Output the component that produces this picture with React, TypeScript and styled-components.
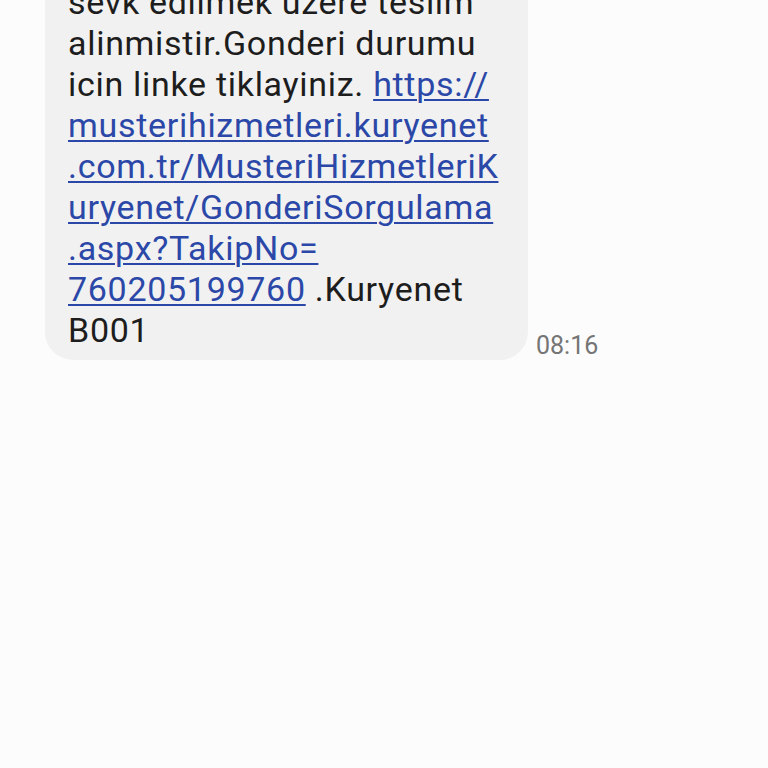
import React from "react";
import styled, { createGlobalStyle } from "styled-components";

const Global = createGlobalStyle`
  html, body {
    margin: 0;
    padding: 0;
    background: #fcfcfc;
  }
  body {
    font-family: Roboto, "Noto Sans", "Liberation Sans", sans-serif;
    -webkit-font-smoothing: antialiased;
  }
`;

const Viewport = styled.div`
  width: 768px;
  height: 768px;
  overflow: hidden;
  background: #fcfcfc;
`;

const Thread = styled.div`
  display: flex;
  flex-direction: column;
  padding: 0 0 0 45px;
  margin-top: -26px;
`;

const MessageRow = styled.div`
  display: flex;
  align-items: flex-end;
  gap: 8px;
`;

const Bubble = styled.div`
  width: 483px;
  box-sizing: border-box;
  background: #f1f1f1;
  border-radius: 28px;
  padding: 8px 16px 9px 23px;
  font-size: 34px;
  line-height: 41px;
  letter-spacing: 0.7px;
  color: #1d1d1d;
  white-space: nowrap;
`;

const Link = styled.a`
  color: #2b48a8;
  text-decoration: underline;
  text-decoration-thickness: 2px;
  text-underline-offset: 3px;
`;

const Time = styled.span`
  font-size: 25px;
  line-height: 29px;
  color: #757575;
  margin-bottom: 0;
`;

export default function App() {
  return (
    <>
      <Global />
      <Viewport>
        <Thread>
          <MessageRow>
            <Bubble>
              sevk edilmek uzere teslim
              <br />
              alinmistir.Gonderi durumu
              <br />
              icin linke tiklayiniz.{" "}
              <Link href="#">
                https://
                <br />
                musterihizmetleri.kuryenet
                <br />
                .com.tr/MusteriHizmetleriK
                <br />
                uryenet/GonderiSorgulama
                <br />
                .aspx?TakipNo=
                <br />
                760205199760
              </Link>{" "}
              .Kuryenet
              <br />
              B001
            </Bubble>
            <Time>08:16</Time>
          </MessageRow>
        </Thread>
      </Viewport>
    </>
  );
}
